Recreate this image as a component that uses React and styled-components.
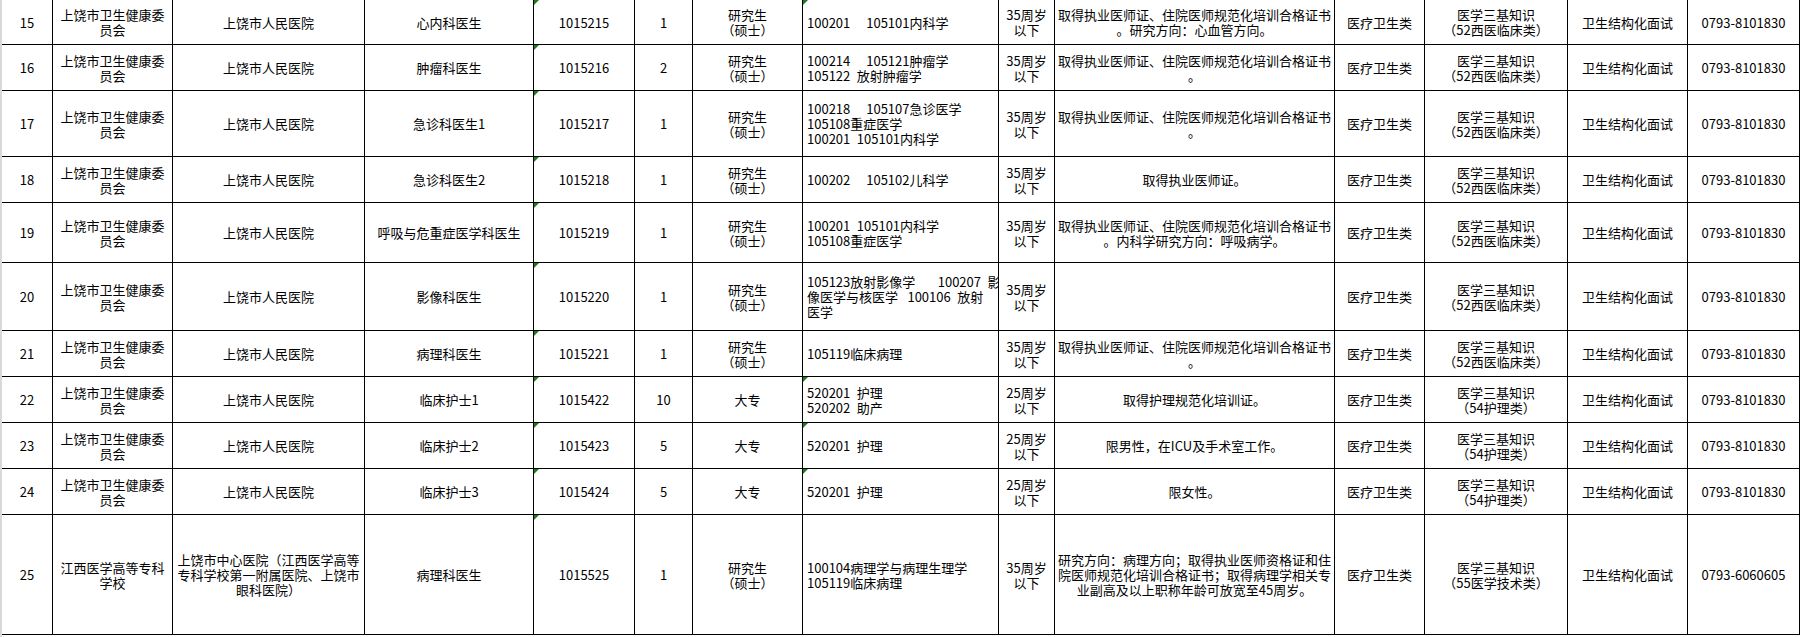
import React from "react";
import styled, { createGlobalStyle } from "styled-components";

const GlobalStyle = createGlobalStyle`
  html, body {
    margin: 0;
    padding: 0;
    background: #ffffff;
  }
  body {
    font-family: "Noto Sans CJK SC", "Noto Sans", sans-serif;
    color: #000;
  }
`;

const COLS = [51, 120, 192, 169, 101, 58, 110, 196, 56, 280, 90, 143, 120, 112];

const Page = styled.div`
  width: 1798px;
  height: 637px;
  overflow: hidden;
  border-left: 2px solid #d9d9d9;
  background: #fff;
`;

const Sheet = styled.div`
  display: grid;
  grid-template-columns: ${COLS.map((c) => c + "px").join(" ")};
  grid-template-rows: ${(p) => p.$rows};
`;

const Cell = styled.div`
  position: relative;
  box-sizing: border-box;
  display: flex;
  flex-direction: column;
  justify-content: center;
  align-items: ${(p) => (p.$left ? "flex-start" : "center")};
  padding: ${(p) => (p.$left ? "0 0 0 4px" : "0 1px")};
  border-right: 1px solid #000;
  border-bottom: 1px solid #000;
  font-size: 13px;
  line-height: 15px;
  text-align: center;
  white-space: pre;
  overflow: hidden;

  &::before {
    content: "";
    display: ${(p) => (p.$flag ? "block" : "none")};
    position: absolute;
    top: 0;
    left: 0;
    border-top: 5px solid #1f7a1f;
    border-right: 5px solid transparent;
  }
`;

const Line = styled.span`
  display: block;
`;

const SW = "上饶市卫生健康委\n员会";
const RM = "上饶市人民医院";
const YJS = "研究生\n（硕士）";
const A35 = "35周岁\n以下";
const A25 = "25周岁\n以下";
const YL = "医疗卫生类";
const XL = "医学三基知识\n（52西医临床类）";
const HL = "医学三基知识\n（54护理类）";
const MS = "卫生结构化面试";
const TEL = "0793-8101830";
const ZS = "取得执业医师证、住院医师规范化培训合格证书\n。";

const rows = [
  { h: 45, no: "15", a: SW, b: RM, c: "心内科医生", code: "1015215", n: "1", edu: YJS,
    major: "100201\u3000 105101内科学", mflag: true, age: A35,
    other: "取得执业医师证、住院医师规范化培训合格证书\n。研究方向：心血管方向。", cat: XL, tel: TEL },
  { h: 46, no: "16", a: SW, b: RM, c: "肿瘤科医生", code: "1015216", n: "2", edu: YJS,
    major: "100214\u3000 105121肿瘤学\n105122\u2002放射肿瘤学", age: A35, other: ZS, cat: XL, tel: TEL },
  { h: 66, no: "17", a: SW, b: RM, c: "急诊科医生1", code: "1015217", n: "1", edu: YJS,
    major: "100218\u3000 105107急诊医学\n105108重症医学\n100201\u2002105101内科学", age: A35, other: ZS, cat: XL, tel: TEL },
  { h: 46, no: "18", a: SW, b: RM, c: "急诊科医生2", code: "1015218", n: "1", edu: YJS,
    major: "100202\u3000 105102儿科学", age: A35, other: "取得执业医师证。", cat: XL, tel: TEL },
  { h: 60, no: "19", a: SW, b: RM, c: "呼吸与危重症医学科医生", code: "1015219", n: "1", edu: YJS,
    major: "100201\u2002105101内科学\n105108重症医学", age: A35,
    other: "取得执业医师证、住院医师规范化培训合格证书\n。内科学研究方向：呼吸病学。", cat: XL, tel: TEL },
  { h: 68, no: "20", a: SW, b: RM, c: "影像科医生", code: "1015220", n: "1", edu: YJS,
    major: "105123放射影像学\u3000\u2002 100207\u2002影\n像医学与核医学\u2002 100106\u2002放射\n医学", age: A35, other: "", cat: XL, tel: TEL },
  { h: 46, no: "21", a: SW, b: RM, c: "病理科医生", code: "1015221", n: "1", edu: YJS,
    major: "105119临床病理", age: A35, other: ZS, cat: XL, tel: TEL },
  { h: 46, no: "22", a: SW, b: RM, c: "临床护士1", code: "1015422", n: "10", edu: "大专",
    major: "520201\u2002护理\n520202\u2002助产", mflag: true, age: A25, other: "取得护理规范化培训证。", cat: HL, tel: TEL },
  { h: 46, no: "23", a: SW, b: RM, c: "临床护士2", code: "1015423", n: "5", edu: "大专",
    major: "520201\u2002护理", mflag: true, age: A25, other: "限男性，在ICU及手术室工作。", cat: HL, tel: TEL },
  { h: 46, no: "24", a: SW, b: RM, c: "临床护士3", code: "1015424", n: "5", edu: "大专",
    major: "520201\u2002护理", mflag: true, age: A25, other: "限女性。", cat: HL, tel: TEL },
  { h: 120, no: "25", a: "江西医学高等专科\n学校",
    b: "上饶市中心医院（江西医学高等\n专科学校第一附属医院、上饶市\n眼科医院）",
    c: "病理科医生", code: "1015525", n: "1", edu: YJS,
    major: "100104病理学与病理生理学\n105119临床病理", age: A35,
    other: "研究方向：病理方向；取得执业医师资格证和住\n院医师规范化培训合格证书；取得病理学相关专\n业副高及以上职称年龄可放宽至45周岁。",
    cat: "医学三基知识\n（55医学技术类）", tel: "0793-6060605" },
];

const Text = ({ value }) =>
  value.split("\n").map((l, i) => <Line key={i}>{l}</Line>);

const App = () => {
  const rowSizes = rows.map((r) => r.h + "px").join(" ");
  return (
    <Page>
      <GlobalStyle />
      <Sheet $rows={rowSizes}>
        {rows.map((r) => (
          <React.Fragment key={r.no}>
            <Cell><Text value={r.no} /></Cell>
            <Cell><Text value={r.a} /></Cell>
            <Cell><Text value={r.b} /></Cell>
            <Cell><Text value={r.c} /></Cell>
            <Cell $flag><Text value={r.code} /></Cell>
            <Cell><Text value={r.n} /></Cell>
            <Cell><Text value={r.edu} /></Cell>
            <Cell $left $flag={r.mflag}><Text value={r.major} /></Cell>
            <Cell><Text value={r.age} /></Cell>
            <Cell><Text value={r.other} /></Cell>
            <Cell><Text value={YL} /></Cell>
            <Cell><Text value={r.cat} /></Cell>
            <Cell><Text value={MS} /></Cell>
            <Cell><Text value={r.tel} /></Cell>
          </React.Fragment>
        ))}
      </Sheet>
    </Page>
  );
};

export default App;
